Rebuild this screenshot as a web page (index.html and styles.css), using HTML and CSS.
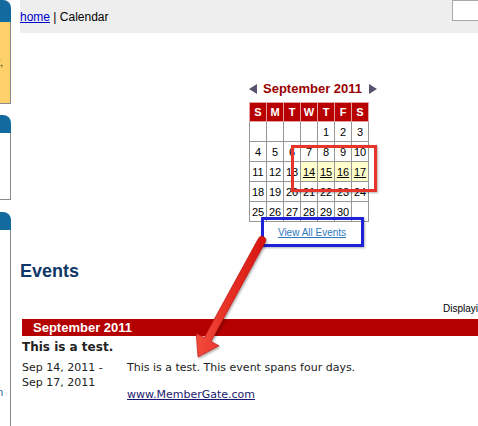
FILE: index.html
```html
<!DOCTYPE html>
<html lang="en">
<head>
  <meta charset="UTF-8">
  <title>Calendar</title>
  <link rel="stylesheet" href="styles.css">
</head>
<body>
  <div class="page">
    <aside class="sidebar">
      <div class="side-box">
        <div class="side-tab side-tab-first"></div>
        <div class="side-body side-body-yellow"><span>Hello, Guest,</span></div>
      </div>
      <div class="side-box">
        <div class="side-tab"></div>
        <div class="side-body side-body-short"></div>
      </div>
      <div class="side-box">
        <div class="side-tab"></div>
        <div class="side-body side-body-long"><a href="#">Sign in</a></div>
      </div>
    </aside>

    <main class="main">
      <div class="crumbs">
        <div class="crumbs-text"><a href="#">home</a> | Calendar</div>
        <input class="search" type="text">
      </div>

      <div class="calendar">
        <div class="cal-title">
          <span class="cal-arrow cal-prev"></span>
          <span class="cal-month">September 2011</span>
          <span class="cal-arrow cal-next"></span>
        </div>
        <table class="cal-grid">
          <tr><th>S</th><th>M</th><th>T</th><th>W</th><th>T</th><th>F</th><th>S</th></tr>
          <tr><td></td><td></td><td></td><td></td><td>1</td><td>2</td><td>3</td></tr>
          <tr><td>4</td><td>5</td><td>6</td><td>7</td><td>8</td><td>9</td><td>10</td></tr>
          <tr><td>11</td><td>12</td><td>13</td><td class="has-event"><a href="#">14</a></td><td class="has-event"><a href="#">15</a></td><td class="has-event"><a href="#">16</a></td><td class="has-event"><a href="#">17</a></td></tr>
          <tr><td>18</td><td>19</td><td>20</td><td>21</td><td>22</td><td>23</td><td>24</td></tr>
          <tr><td>25</td><td>26</td><td>27</td><td>28</td><td>29</td><td>30</td><td></td></tr>
        </table>
        <a class="cal-all" href="#">View All Events</a>
      </div>

      <h1 class="events-title">Events</h1>
      <div class="results">Displaying 1 - 1 of 1</div>

      <div class="month-bar">September 2011</div>
      <div class="event">
        <h2 class="event-name">This is a test.</h2>
        <div class="event-row">
          <div class="event-date">Sep 14, 2011 -<br>Sep 17, 2011</div>
          <div class="event-desc">
            <p>This is a test. This event spans four days.</p>
            <a class="event-link" href="#">www.MemberGate.com</a>
          </div>
        </div>
      </div>
      <hr class="event-rule">
    </main>

    <!-- screenshot annotations -->
    <div class="note-box note-red"></div>
    <div class="note-box note-blue"></div>
    <svg class="note-arrow" width="85" height="135" viewBox="0 0 85 135">
      <defs>
        <linearGradient id="arrowFill" x1="0" y1="0" x2="1" y2="0">
          <stop offset="0" stop-color="#f24a3c"/>
          <stop offset="1" stop-color="#d8140e"/>
        </linearGradient>
        <filter id="arrowShadow" x="-20%" y="-20%" width="140%" height="140%">
          <feDropShadow dx="1" dy="1.5" stdDeviation="1.2" flood-color="#000" flood-opacity="0.35"/>
        </filter>
      </defs>
      <path d="M 68.6 8.1 L 14.2 107.6 L 6.2 103.3 L 8 127 L 29 115.7 L 21 111.4 L 75.4 11.9 A 3.9 3.9 0 0 0 68.6 8.1 Z"
            fill="url(#arrowFill)" stroke="#b80d08" stroke-width="0.6" filter="url(#arrowShadow)"/>
    </svg>
  </div>
</body>
</html>
```

FILE: styles.css
```css
html {
  overflow: hidden;
}

body {
  margin: 0;
  font-family: "Liberation Sans", Arial, sans-serif;
  background-color: #fff;
  color: #000;
}

.page {
  position: relative;
  display: flex;
  align-items: flex-start;
  height: 426px;
  overflow: hidden;
}

/* left column, mostly scrolled off */
.sidebar {
  width: 11px;
  flex-shrink: 0;
}

.side-box + .side-box {
  margin-top: 11px;
}

.side-box:last-child {
  margin-top: 12px;
}

.side-tab {
  height: 18px;
  background-color: #136a9e;
  border-top-right-radius: 8px;
}

.side-tab-first {
  height: 22px;
}

.side-body {
  display: flex;
  justify-content: flex-end;
  overflow: hidden;
  white-space: nowrap;
  border-right: 1px solid #8a8a8a;
  border-bottom: 1px solid #8a8a8a;
  font-size: 10px;
  padding-right: 6px;
}

.side-body-yellow {
  height: 81px;
  align-items: center;
  padding-right: 7px;
  background-color: #fdd06a;
  color: #333;
}

.side-body-short {
  height: 66px;
}

.side-body-long {
  height: 300px;
  padding-top: 157px;
  padding-right: 7px;
  box-sizing: border-box;
  border-bottom: none;
  line-height: 12px;
}

.side-body-long a {
  color: #1560a0;
  text-decoration: none;
}

.main {
  width: 640px;
  margin-left: 9px;
  flex-shrink: 0;
}

/* breadcrumb bar */
.crumbs {
  display: flex;
  align-items: flex-start;
  height: 33px;
  background-color: #eeeeee;
  font-size: 12px;
  line-height: 14px;
}

.crumbs-text {
  margin-top: 10px;
}

.crumbs-text a {
  color: #0000cc;
}

.search {
  margin-left: auto;
  margin-right: 58px;
  width: 150px;
  height: 21px;
  box-sizing: border-box;
  padding: 0;
  border: 1px solid #a8a8a8;
  background-color: #fff;
}

/* mini calendar */
.calendar {
  width: 126px;
  margin: 48px 0 0 229px;
  text-align: center;
}

.cal-title {
  display: flex;
  align-items: center;
  height: 16px;
  gap: 6px;
}

.cal-month {
  font-size: 13px;
  font-weight: bold;
  line-height: 16px;
  color: #990000;
  white-space: nowrap;
}

.cal-arrow {
  width: 0;
  height: 0;
  border-top: 5px solid transparent;
  border-bottom: 5px solid transparent;
}

.cal-prev {
  border-right: 8px solid #57556e;
}

.cal-next {
  margin-left: 1px;
  border-left: 8px solid #57556e;
}

.cal-grid {
  margin-top: 5px;
  border-collapse: collapse;
  font-size: 11px;
}

.cal-grid th {
  width: 16px;
  height: 18px;
  padding: 0;
  background-color: #b80000;
  border: 1px solid #e3a3a3;
  color: #fff;
  font-weight: bold;
}

.cal-grid td {
  width: 16px;
  height: 19px;
  padding: 0;
  border: 1px solid #979797;
  text-align: center;
}

.cal-grid td.has-event {
  background-color: #ffffcc;
}

.cal-grid td.has-event a {
  color: #000;
}

.cal-all {
  display: block;
  margin-top: 5px;
  font-size: 10px;
  line-height: 12px;
  color: #2f78bd;
}

/* events list */
.events-title {
  margin: 22px 0 0;
  font-size: 18px;
  line-height: 21px;
  color: #0f3768;
}

.results {
  margin: 21px 0 0 423px;
  font-size: 10px;
  line-height: 12px;
  white-space: nowrap;
}

.month-bar {
  margin: 4px 0 0 2px;
  height: 17px;
  padding-left: 11px;
  background-color: #b40000;
  color: #fff;
  font-size: 13px;
  font-weight: bold;
  line-height: 17px;
}

.event {
  margin-left: 2px;
  font-family: "DejaVu Sans", Verdana, sans-serif;
  color: #222;
}

.event-name {
  margin: 4px 0 0;
  font-size: 12px;
  line-height: 15px;
}

.event-row {
  display: grid;
  grid-template-columns: 105px 1fr;
  margin-top: 5px;
  font-size: 11px;
  line-height: 15px;
}

.event-desc p {
  margin: 0;
}

.event-link {
  display: inline-block;
  margin-top: 12px;
  color: #1a1a70;
}

.event-rule {
  margin: 34px 0 0 2px;
  border: none;
  border-top: 1px solid #888;
}

/* annotation overlays */
.note-box {
  position: absolute;
  box-sizing: border-box;
  box-shadow: 1px 1px 2px rgba(0, 0, 0, 0.3);
}

.note-red {
  left: 291px;
  top: 145px;
  width: 86px;
  height: 47px;
  border: 3px solid #e8342b;
}

.note-blue {
  left: 261px;
  top: 217px;
  width: 103px;
  height: 30px;
  border: 3px solid #1d22d6;
}

.note-arrow {
  position: absolute;
  left: 190px;
  top: 230px;
}
```
